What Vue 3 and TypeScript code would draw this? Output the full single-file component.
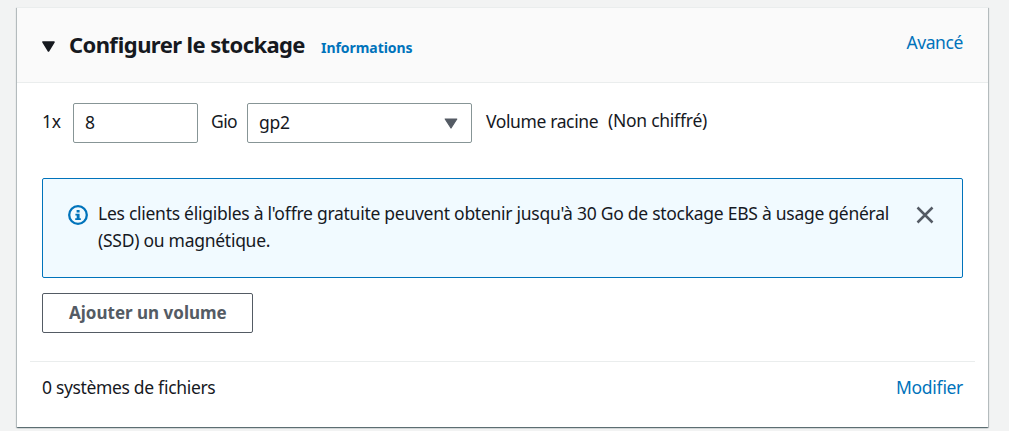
<script setup lang="ts">
import { ref } from 'vue'

const size = ref<string>('8')
const volumeType = ref<string>('gp2')
const showNotice = ref<boolean>(true)
</script>

<template>
  <main class="page">
    <section class="card">
      <header class="card-header">
        <svg class="caret" width="13" height="11" viewBox="0 0 13 11"><path d="M1 1h11L6.5 10z" stroke-width="1.6" stroke-linejoin="round" stroke="currentColor" fill="currentColor" /></svg>
        <h2 class="title">Configurer le stockage</h2>
        <a class="info-link">Informations</a>
        <a class="link advanced">Avancé</a>
      </header>

      <div class="volume-row">
        <span class="count">1x</span>
        <div class="field size-field"><span>{{ size }}</span></div>
        <span class="unit">Gio</span>
        <div class="field type-field">
          <span class="type-value">{{ volumeType }}</span>
          <svg class="select-caret" width="14" height="11" viewBox="0 0 14 11"><path d="M1.2 1h11.6L7 10z" stroke-width="1.2" stroke-linejoin="round" stroke="currentColor" fill="currentColor" /></svg>
        </div>
        <span class="root">Volume racine</span>
        <span class="encryption">(Non chiffré)</span>
      </div>

      <div v-if="showNotice" class="notice">
        <svg class="info-icon" width="20" height="20" viewBox="0 0 20 20">
          <circle cx="10" cy="10" r="8.8" fill="none" stroke="currentColor" stroke-width="2.3" />
          <path d="M8.6 5h3v2.6h-3zM7.4 8.7h4.2v4.5h1.2v1.9H7.2v-1.9h1.5v-2.7H7.4z" fill="currentColor" />
        </svg>
        <p class="notice-text">
          <span class="line-one">Les clients éligibles à l'offre gratuite peuvent obtenir jusqu'à 30 Go de stockage EBS à usage général</span><br />
          <span class="line-two">(SSD) ou magnétique.</span>
        </p>
        <svg class="close" width="18" height="18" viewBox="0 0 18 18" @click="showNotice = false"><path d="M1.5 1.5l15 15M16.5 1.5l-15 15" stroke="currentColor" stroke-width="2.5" fill="none" /></svg>
      </div>

      <button class="add-button"><span>Ajouter un volume</span></button>

      <footer class="card-footer">
        <span class="systems">0 systèmes de fichiers</span>
        <a class="link modify">Modifier</a>
      </footer>
    </section>
  </main>
</template>

<style>
body {
  background: #f2f3f3;
  overflow: hidden;
}
</style>

<style scoped>
.page {
  box-sizing: border-box;
  height: 431px;
  padding: 7px 21px 4px 17px;
  font-family: "Noto Sans", "Open Sans", sans-serif;
  font-size: 17.5px;
  line-height: 27px;
  letter-spacing: -0.27px;
  color: #16191f;
  white-space: nowrap;
  font-feature-settings: "liga" 1;
}
.card {
  display: flex;
  flex-direction: column;
  height: 420px;
  background: #fff;
  box-shadow: 0 1px 1px 0 rgba(0, 28, 36, 0.4), 1px 1px 1px 0 rgba(0, 28, 36, 0.2), -1px 1px 1px 0 rgba(0, 28, 36, 0.2);
}
.card-header {
  box-sizing: border-box;
  display: flex;
  align-items: center;
  height: 76px;
  padding: 0 25px;
  background: #fafafa;
  border-top: 1px solid #eaeded;
  border-bottom: 1px solid #eaeded;
}
.caret {
  margin-top: 2px;
}
.title {
  margin: -2px 0 0 14px;
  width: 239px;
  font-size: 22px;
  line-height: 28px;
  font-weight: 700;
  letter-spacing: -0.6px;
}
.info-link {
  margin: 4px 0 0 13px;
  font-size: 14px;
  font-weight: 700;
  letter-spacing: -0.05px;
  color: #0073bb;
}
.link {
  margin-left: auto;
  color: #0073bb;
}
.advanced {
  margin-top: -6px;
  letter-spacing: -0.4px;
}
.volume-row {
  display: flex;
  align-items: center;
  height: 40px;
  margin: 20px 25px 0;
}
.field {
  box-sizing: border-box;
  display: flex;
  align-items: center;
  height: 40px;
  padding: 0 11px;
  border: 1px solid #879596;
  border-radius: 2px;
}
.field span {
  margin-top: -2px;
}
.count {
  width: 31px;
  margin-top: -4px;
  letter-spacing: -0.3px;
}
.size-field {
  width: 125px;
}
.unit {
  width: 36px;
  margin: -4px 0 0 13px;
  letter-spacing: -0.6px;
}
.type-field {
  width: 225px;
  justify-content: space-between;
  padding-right: 13px;
}
.select-caret {
  color: #545b64;
}
.root {
  width: 122px;
  margin: -4px 0 0 14px;
  letter-spacing: -0.38px;
}
.encryption {
  margin-top: -6px;
}
.notice {
  box-sizing: border-box;
  display: flex;
  align-items: flex-start;
  height: 100px;
  margin: 35px 25px 0;
  padding: 21px 28px 0 25px;
  background: #f1faff;
  border: 1px solid #0073bb;
  border-radius: 2px;
}
.info-icon {
  flex: none;
  margin-top: 5px;
  color: #0073bb;
}
.notice-text {
  margin: 0 0 0 10px;
  width: 806px;
}
.close {
  flex: none;
  margin: 6px 0 0 12px;
  color: #545b64;
}
.add-button {
  box-sizing: border-box;
  width: 211px;
  height: 40px;
  margin: 15px 0 0 25px;
  padding: 0 0 2px 26px;
  border: 1px solid #545b64;
  border-radius: 2px;
  background: #fff;
  color: #545b64;
  font: inherit;
  font-size: 17px;
  font-weight: 700;
  letter-spacing: 0;
  text-align: left;
}
.card-footer {
  display: flex;
  align-items: center;
  height: 50px;
  margin: 28px 13px 0;
  padding: 0 12px;
  border-top: 1px solid #eaeded;
}
.systems,
.modify {
  letter-spacing: -0.34px;
}
</style>
